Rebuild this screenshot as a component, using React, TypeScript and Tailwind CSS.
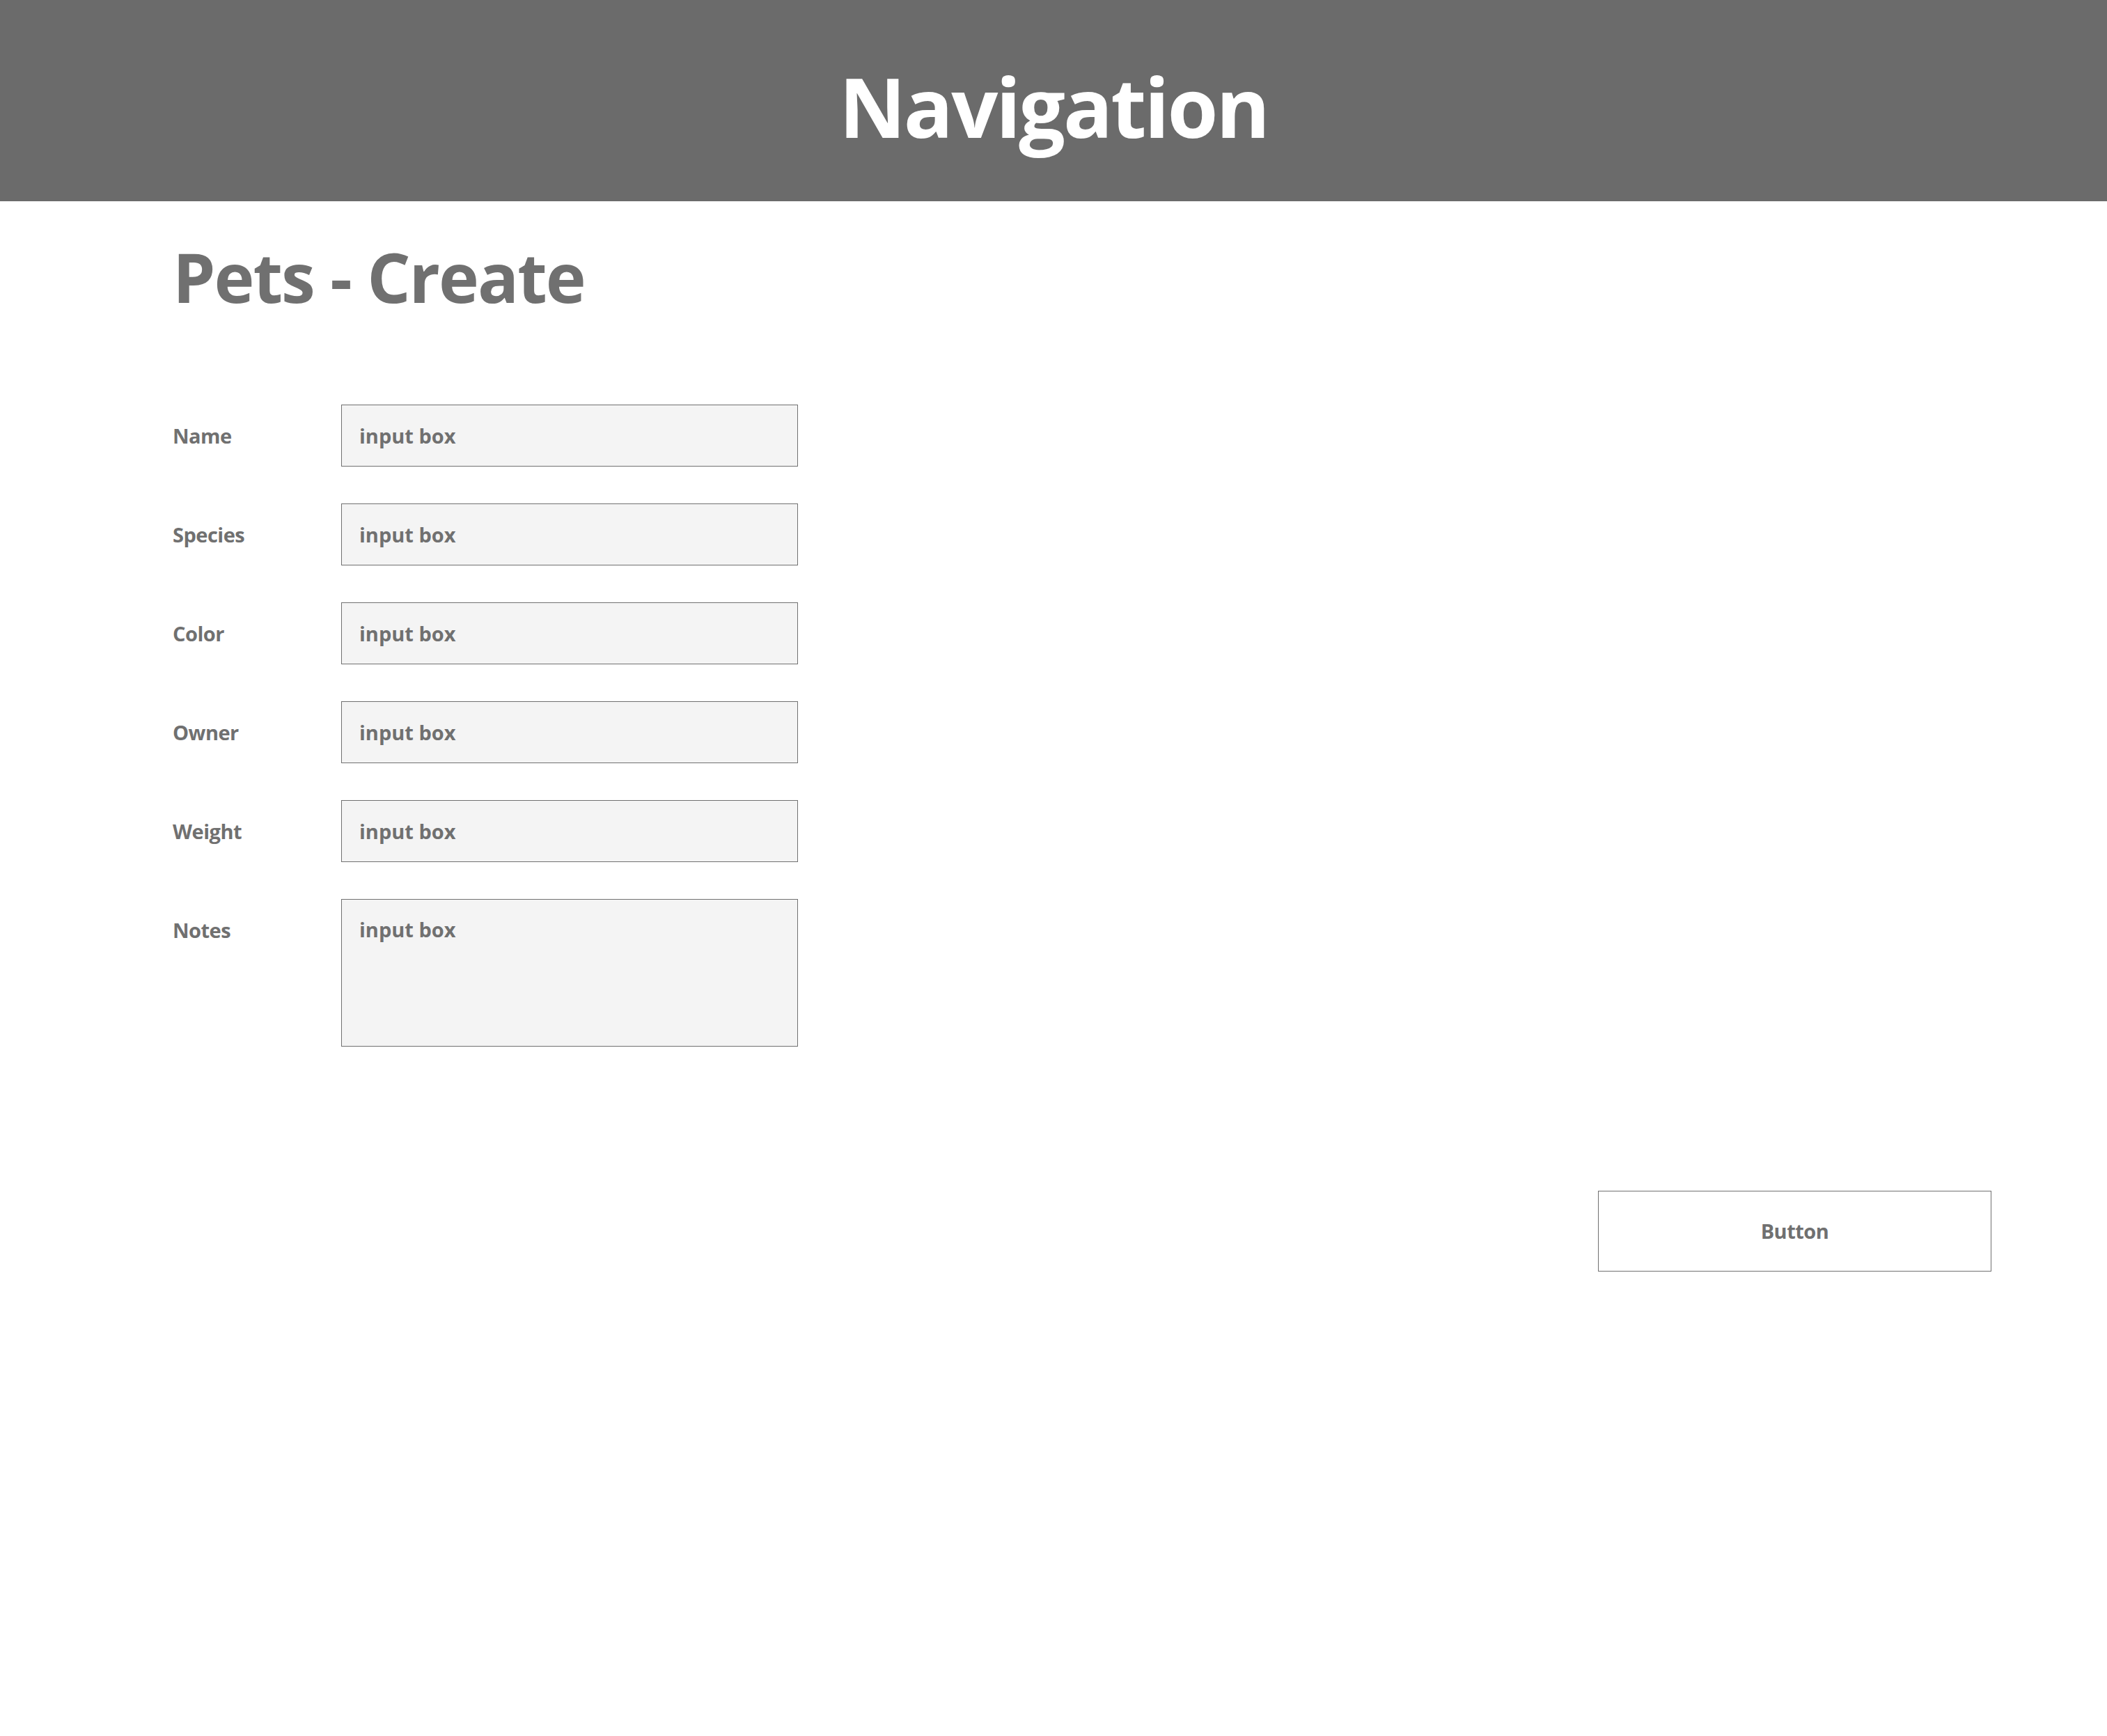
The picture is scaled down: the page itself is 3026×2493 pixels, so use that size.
import React from 'react';

const fields = ['Name', 'Species', 'Color', 'Owner', 'Weight'];

const Field = ({ label, multiline }: { label: string; multiline?: boolean }) => (
  <div className="flex items-start">
    <label className="w-[242px] h-[89px] flex items-center text-[29px] font-bold text-[#707070] tracking-[-0.5px]">
      {label}
    </label>
    {multiline ? (
      <textarea
        placeholder="input box"
        className="w-[656px] h-[212px] resize-none border border-[#707070] bg-[#f4f4f4] pl-[25px] pt-[23px] text-[29px] leading-[40px] font-bold text-[#707070] outline-none placeholder:text-[#707070] placeholder:opacity-100"
      />
    ) : (
      <input
        type="text"
        placeholder="input box"
        className="w-[656px] h-[89px] border border-[#707070] bg-[#f4f4f4] pl-[25px] text-[29px] font-bold text-[#707070] outline-none placeholder:text-[#707070] placeholder:opacity-100"
      />
    )}
  </div>
);

export default function App() {
  return (
    <div className="min-h-screen bg-white font-['Open_Sans',sans-serif]">
      {/* Navigation */}
      <header className="h-[289px] bg-[#6b6b6b] flex items-center justify-center pt-[16px]">
        <h1 className="text-[118px] leading-none font-bold text-white tracking-[-3px]">Navigation</h1>
      </header>

      <main className="pl-[248px] pr-[166px]">
        <h2 className="mt-[59px] text-[98px] leading-none font-bold text-[#707070] tracking-[-2px]">
          Pets - Create
        </h2>

        {/* Form */}
        <form className="mt-[135px] flex flex-col gap-[53px]">
          {fields.map((f) => (
            <Field key={f} label={f} />
          ))}
          <Field label="Notes" multiline />
        </form>

        <div className="mt-[207px] flex justify-end">
          <button
            type="button"
            className="w-[565px] h-[116px] border border-[#707070] bg-white text-[29px] font-bold tracking-[-0.5px] text-[#707070]"
          >
            Button
          </button>
        </div>
      </main>
    </div>
  );
}
